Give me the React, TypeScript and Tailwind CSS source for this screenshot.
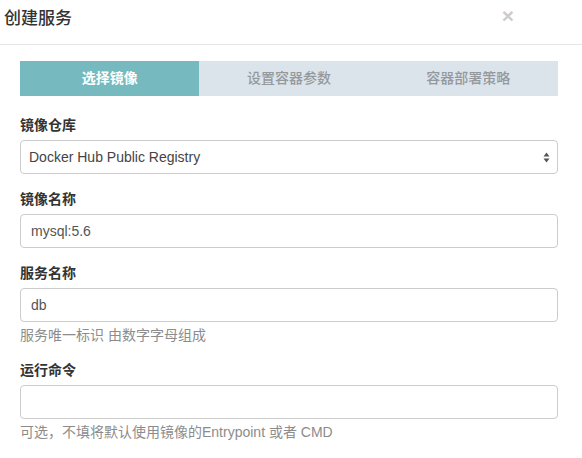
const font = {
  fontFamily: '"Liberation Sans", "Noto Sans CJK SC", sans-serif',
};

const tabs = ["选择镜像", "设置容器参数", "容器部署策略"];

function Label({ children }: { children: string }) {
  return (
    <label className="mb-[5px] block text-[14px] font-bold leading-[20px] text-[#333]">
      {children}
    </label>
  );
}

function Input({ value }: { value?: string }) {
  return (
    <div className="flex h-[34px] items-center rounded-[4px] border border-[#ccc] bg-white px-[10px] text-[14px] text-[#555]">
      {value}
    </div>
  );
}

export default function App() {
  return (
    <div className="h-[458px] w-[582px] overflow-hidden bg-white" style={font}>
      {/* Header */}
      <div className="flex h-[45px] items-start justify-between border-b border-[#e5e5e5] pl-[4px] pr-[68px] pt-[7px]">
        <h4 className="text-[17px] font-medium leading-[24px] text-[#333]">
          创建服务
        </h4>
        <span className="mt-[-2px] text-[21px] font-bold leading-[21px] text-[#ccc]">
          ×
        </span>
      </div>

      {/* Body */}
      <div className="pl-[20px] pr-[24px] pt-[16px]">
        {/* Steps */}
        <div className="flex h-[35px]">
          {tabs.map((t, i) => (
            <div
              key={t}
              className={`flex flex-1 items-center justify-center text-[14px] ${
                i === 0
                  ? "bg-[#76b9be] font-bold text-white"
                  : "bg-[#dce4eb] font-medium text-[#94999e]"
              }`}
            >
              {t}
            </div>
          ))}
        </div>

        <div className="mt-[19px] mb-[15px]">
          <Label>镜像仓库</Label>
          <div className="flex h-[34px] items-center justify-between rounded-[4px] border border-[#ccc] bg-white pl-[8px] pr-[7px] text-[14px] text-[#444]">
            <span>Docker Hub Public Registry</span>
            <svg width="7" height="11" viewBox="0 0 7 11">
              <path d="M3.5 0.5 L6.5 4.5 L0.5 4.5 Z" fill="#555" />
              <path d="M3.5 10.5 L6.5 6.5 L0.5 6.5 Z" fill="#555" />
            </svg>
          </div>
        </div>

        <div className="mb-[15px]">
          <Label>镜像名称</Label>
          <Input value="mysql:5.6" />
        </div>

        <div className="mb-[15px]">
          <Label>服务名称</Label>
          <Input value="db" />
          <p className="mt-[3px] text-[14px] leading-[20px] text-[#8c8c8c]">
            服务唯一标识 由数字字母组成
          </p>
        </div>

        <div>
          <Label>运行命令</Label>
          <Input />
          <p className="mt-[3px] text-[14px] leading-[20px] text-[#8c8c8c]">
            可选，不填将默认使用镜像的Entrypoint 或者 CMD
          </p>
        </div>
      </div>
    </div>
  );
}
